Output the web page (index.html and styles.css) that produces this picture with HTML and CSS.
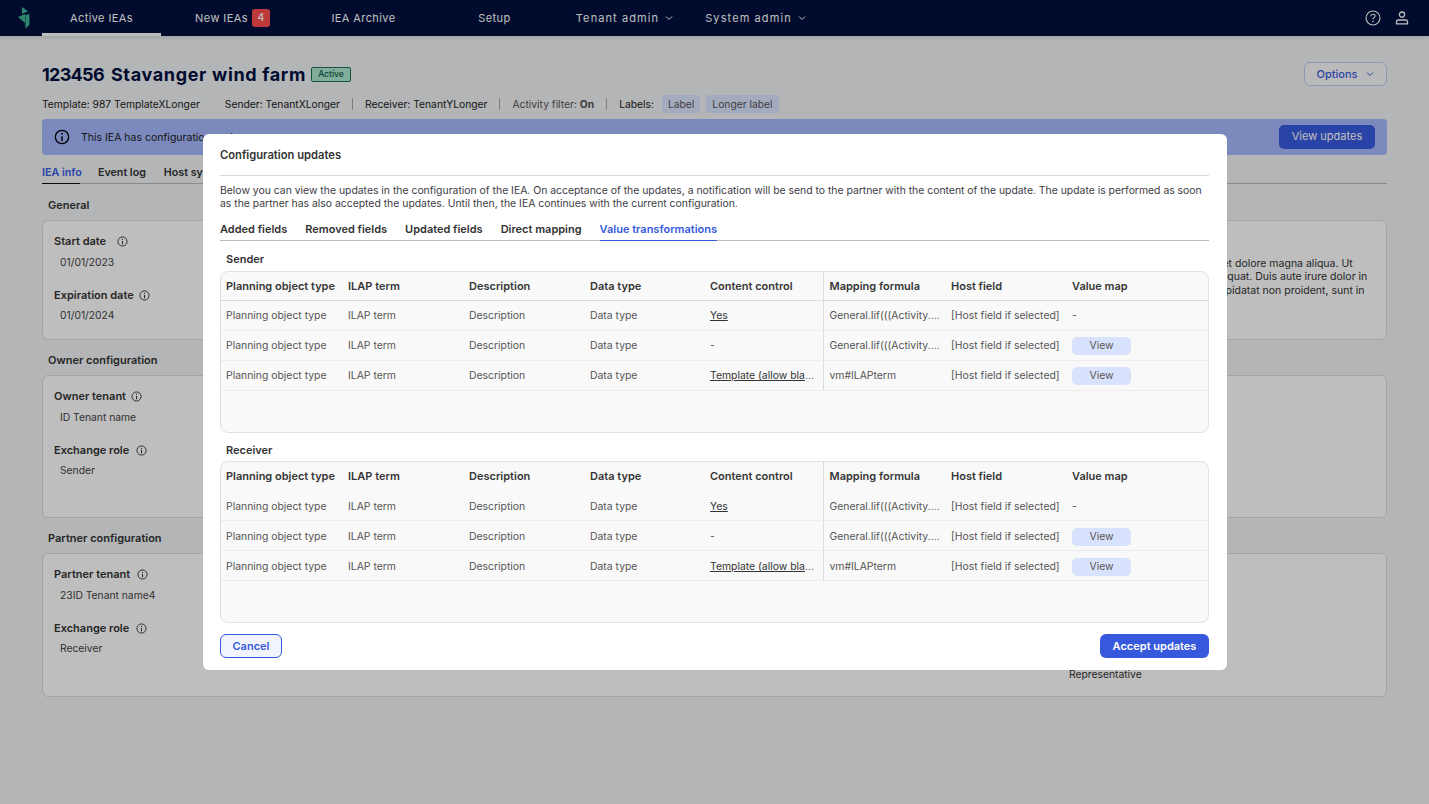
FILE: index.html
```html
<!DOCTYPE html>
<html lang="en">
<head>
<meta charset="utf-8">
<title>Stavanger wind farm</title>
<link rel="stylesheet" href="styles.css">
</head>
<body>
<svg class="defs" width="0" height="0" aria-hidden="true">
  <symbol id="i-info" viewBox="0 0 12 12">
    <circle cx="6" cy="6" r="5" fill="none" stroke="currentColor" stroke-width="1"/>
    <path d="M6 5.400V9" fill="none" stroke="currentColor" stroke-width="1.100"/>
    <circle cx="6" cy="3.600" r=".7" fill="currentColor"/>
  </symbol>
  <symbol id="i-chev" viewBox="0 0 8 6">
    <path d="M1 1.500 4 4.500 7 1.500" fill="none" stroke="currentColor" stroke-width="1"/>
  </symbol>
</svg>

<header class="nav">
  <svg class="logo" viewBox="0 0 12 22" width="12" height="22" aria-label="Logo">
    <path d="M4 0 10 4.200 4 7Z" fill="#3db497"/>
    <path d="M0 10 7 7V16Z" fill="#3db497"/>
    <path d="M7.400 8 11.400 7V18L7.400 21.500Z" fill="#3db497"/>
  </svg>
  <nav class="nav-items">
    <a class="nav-item is-active">Active IEAs</a>
    <a class="nav-item">New IEAs <span class="count">4</span></a>
    <a class="nav-item">IEA Archive</a>
    <a class="nav-item">Setup</a>
    <a class="nav-item nav-wide">Tenant admin <svg class="chev" width="8" height="6"><use href="#i-chev"/></svg></a>
    <a class="nav-item nav-wide">System admin <svg class="chev" width="8" height="6"><use href="#i-chev"/></svg></a>
  </nav>
  <div class="nav-icons">
    <svg width="16" height="16" viewBox="0 0 16 16" aria-label="Help">
      <circle cx="8" cy="8" r="7" fill="none" stroke="currentColor" stroke-width="1.100"/>
      <path d="M5.900 6.200C5.900 4.900 6.900 4.200 8 4.200S10.100 5 10.100 6.100C10.100 7.600 8 7.700 8 9.400" fill="none" stroke="currentColor" stroke-width="1.100"/>
      <circle cx="8" cy="11.500" r=".8" fill="currentColor"/>
    </svg>
    <svg width="14" height="14" viewBox="0 0 14 14" aria-label="Account">
      <circle cx="7" cy="3.600" r="2.600" fill="none" stroke="currentColor" stroke-width="1.300"/>
      <path d="M1.500 12.800V10.800C1.500 9.800 2.300 9 3.300 9H10.700C11.700 9 12.500 9.800 12.500 10.800V12.800Z" fill="none" stroke="currentColor" stroke-width="1.300"/>
    </svg>
  </div>
</header>

<main class="page">
  <div class="title-row">
    <h1 class="title"><span class="title-num">123456</span><span class="title-name">Stavanger wind farm</span></h1>
    <span class="status">Active</span>
    <button class="options">Options <svg class="chev" width="8" height="6"><use href="#i-chev"/></svg></button>
  </div>
  <div class="meta">
    <span>Template: 987 TemplateXLonger</span>
    <i class="sep sep-clear"></i>
    <span>Sender: TenantXLonger</span>
    <i class="sep"></i>
    <span>Receiver: TenantYLonger</span>
    <i class="sep"></i>
    <span class="muted">Activity filter: <b>On</b></span>
    <i class="sep"></i>
    <span>Labels:</span>
    <span class="chips"><span class="chip">Label</span><span class="chip">Longer label</span></span>
  </div>
  <div class="banner">
    <svg class="banner-icon" width="16" height="16"><use href="#i-info"/></svg>
    <span class="banner-text">This IEA has configuration updates</span>
    <button class="btn-dark">View updates</button>
  </div>
  <div class="page-tabs">
    <a class="page-tab is-active">IEA info</a>
    <a class="page-tab">Event log</a>
    <a class="page-tab">Host system</a>
  </div>

  <h2 class="section-title">General</h2>
  <section class="card card-general">
    <div class="field">
      <div class="field-label">Start date <svg class="info info-far" width="11" height="11"><use href="#i-info"/></svg></div>
      <div class="field-value">01/01/2023</div>
      <div class="field-label field-gap">Expiration date <svg class="info" width="11" height="11"><use href="#i-info"/></svg></div>
      <div class="field-value">01/01/2024</div>
    </div>
    <p class="lorem">Lorem ipsum dolor sit amet, consectetur adipiscing elit, sed do eiusmod tempor incididunt ut labore et dolore magna aliqua. Ut<br>enim ad minim veniam, quis nostrud exercitation ullamco laboris nisi ut aliquip ex ea commodo consequat. Duis aute irure dolor in<br>reprehenderit in voluptate velit esse cillum dolore eu fugiat nulla pariatur. Excepteur sint occaecat cupidatat non proident, sunt in</p>
  </section>

  <h2 class="section-title section-gap">Owner configuration</h2>
  <section class="card card-owner">
    <div class="field">
      <div class="field-label">Owner tenant <svg class="info" width="11" height="11"><use href="#i-info"/></svg></div>
      <div class="field-value">ID Tenant name</div>
      <div class="field-label field-gap">Exchange role <svg class="info info-mid" width="11" height="11"><use href="#i-info"/></svg></div>
      <div class="field-value">Sender</div>
    </div>
  </section>

  <h2 class="section-title section-gap">Partner configuration</h2>
  <section class="card card-partner">
    <div class="field">
      <div class="field-label">Partner tenant <svg class="info info-mid" width="11" height="11"><use href="#i-info"/></svg></div>
      <div class="field-value">23ID Tenant name4</div>
      <div class="field-label field-gap">Exchange role <svg class="info info-mid" width="11" height="11"><use href="#i-info"/></svg></div>
      <div class="field-value">Receiver</div>
    </div>
    <div class="field-end">Representative</div>
  </section>
</main>

<div class="overlay"></div>

<div class="modal" role="dialog" aria-label="Configuration updates">
  <h3 class="modal-title">Configuration updates</h3>
  <p class="modal-text">Below you can view the updates in the configuration of the IEA. On acceptance of the updates, a notification will be send to the partner with the content of the update. The update is performed as soon as the partner has also accepted the updates. Until then, the IEA continues with the current configuration.</p>
  <div class="modal-tabs">
    <a class="modal-tab">Added fields</a>
    <a class="modal-tab">Removed fields</a>
    <a class="modal-tab">Updated fields</a>
    <a class="modal-tab">Direct mapping</a>
    <a class="modal-tab is-active">Value transformations</a>
  </div>

  <h4 class="table-title">Sender</h4>
  <div class="table-wrap">
    <table class="grid grid-lined">
      <thead>
        <tr><th>Planning object type</th><th>ILAP term</th><th>Description</th><th>Data type</th><th class="split">Content control</th><th>Mapping formula</th><th>Host field</th><th>Value map</th></tr>
      </thead>
      <tbody>
        <tr><td>Planning object type</td><td>ILAP term</td><td>Description</td><td>Data type</td><td class="split"><u>Yes</u></td><td>General.Iif(((Activity....</td><td>[Host field if selected]</td><td>-</td></tr>
        <tr><td>Planning object type</td><td>ILAP term</td><td>Description</td><td>Data type</td><td class="split">-</td><td>General.Iif(((Activity....</td><td>[Host field if selected]</td><td><span class="view">View</span></td></tr>
        <tr><td>Planning object type</td><td>ILAP term</td><td>Description</td><td>Data type</td><td class="split"><u>Template (allow bla</u>...</td><td>vm#ILAPterm</td><td>[Host field if selected]</td><td><span class="view">View</span></td></tr>
      </tbody>
    </table>
  </div>

  <h4 class="table-title table-title-next">Receiver</h4>
  <div class="table-wrap">
    <table class="grid grid-plain">
      <thead>
        <tr><th>Planning object type</th><th>ILAP term</th><th>Description</th><th>Data type</th><th class="split">Content control</th><th>Mapping formula</th><th>Host field</th><th>Value map</th></tr>
      </thead>
      <tbody>
        <tr><td>Planning object type</td><td>ILAP term</td><td>Description</td><td>Data type</td><td class="split"><u>Yes</u></td><td>General.Iif(((Activity....</td><td>[Host field if selected]</td><td>-</td></tr>
        <tr><td>Planning object type</td><td>ILAP term</td><td>Description</td><td>Data type</td><td class="split">-</td><td>General.Iif(((Activity....</td><td>[Host field if selected]</td><td><span class="view">View</span></td></tr>
        <tr><td>Planning object type</td><td>ILAP term</td><td>Description</td><td>Data type</td><td class="split"><u>Template (allow bla</u>...</td><td>vm#ILAPterm</td><td>[Host field if selected]</td><td><span class="view">View</span></td></tr>
      </tbody>
    </table>
  </div>

  <div class="modal-actions">
    <button class="btn-outline">Cancel</button>
    <button class="btn-primary">Accept updates</button>
  </div>
</div>
</body>
</html>
```

FILE: styles.css
```css
* { box-sizing: border-box; }
html, body { margin: 0; height: 100%; }
body {
  width: 1429px;
  height: 804px;
  overflow: hidden;
  background: #f1f3f5;
  color: #1c1c22;
  font-family: Inter, "Liberation Sans", sans-serif;
  font-size: 10.3px;
}
.defs { position: absolute; }
button { font-family: inherit; cursor: pointer; }

/* Top navigation */
.nav {
  display: flex;
  align-items: center;
  height: 36px;
  background: #000f3e;
  color: #fff;
  box-shadow: 0 1px 4px rgba(0,0,0,.15);
}
.logo { margin-left: 18px; flex: none; }
.nav-items { display: flex; gap: 12px; margin-left: 12px; height: 100%; }
.nav-item {
  display: flex;
  align-items: center;
  justify-content: center;
  gap: 4px;
  width: 119px;
  height: 100%;
  font-size: 11px;
  letter-spacing: .4px;
  border-bottom: 3px solid transparent;
  padding-top: 2px;
  white-space: nowrap;
}
.nav-item.is-active { border-bottom-color: #fff; }
.nav-wide { letter-spacing: 1.1px; margin-left: -1px; margin-right: 1px; }
.chev { flex: none; margin-left: 2px; }
.count {
  background: #ff4e4e;
  border-radius: 3px;
  width: 18px;
  height: 18px;
  display: inline-flex;
  align-items: center;
  justify-content: center;
  font-size: 10.5px;
  font-weight: 500;
  letter-spacing: 0;
}
.nav-icons { margin-left: auto; margin-right: 20px; display: flex; align-items: center; gap: 14px; }

/* Page */
.page { padding: 0 42px; }
.title-row { display: flex; align-items: center; height: 24px; margin-top: 26px; }
.title { margin: 0; display: flex; gap: 7px; font-size: 18px; font-weight: 700; color: #000f3e; white-space: nowrap; }
.title-num { letter-spacing: -.7px; }
.title-name { letter-spacing: .65px; }
.status {
  margin-left: 5px;
  height: 15px;
  width: 40px;
  display: flex;
  align-items: center;
  justify-content: center;
  background: #ade9d1;
  border: 1px solid #1f6e55;
  border-radius: 2px;
  color: #0c5a45;
  font-size: 8.5px;
  font-weight: 500;
}
.options {
  margin-left: auto;
  width: 83px;
  height: 24px;
  background: #fafafc;
  border: 1px solid #c0cdf5;
  border-radius: 6px;
  color: #385adf;
  font-size: 11px;
  font-weight: 500;
  display: flex;
  align-items: center;
  justify-content: center;
  gap: 7px;
  padding: 0;
}
.meta { display: flex; align-items: center; gap: 12px; height: 18px; margin-top: 9px; font-size: 10.3px; white-space: nowrap; }
.muted { color: #555; }
.sep { width: 1px; height: 12px; background: #aaa; }
.sep-clear { background: transparent; }
.chips { display: flex; gap: 6px; margin-left: -4px; }
.chip { background: #dde6ff; color: #555; border-radius: 3px; height: 18px; padding: 0 6px; display: flex; align-items: center; }

.banner {
  display: flex;
  align-items: center;
  height: 36px;
  margin-top: 6px;
  padding: 0 12px;
  background: #a5b8fe;
  border-radius: 4px;
}
.banner-icon { color: #000; flex: none; }
.banner-text { margin-left: 11px; font-size: 10.5px; }
.btn-dark {
  margin-left: auto;
  width: 96px;
  height: 24px;
  border: 0;
  border-radius: 5px;
  background: #385adf;
  color: #fff;
  font-size: 11px;
  padding: 0 0 2px;
}
.page-tabs { display: flex; gap: 18px; height: 23px; margin-top: 6px; border-bottom: 1px solid #b8b8b8; }
.page-tab { font-size: 10.7px; font-weight: 600; color: #333; height: 23px; padding-top: 5px; white-space: nowrap; }
.page-tab.is-active { color: #385adf; border-bottom: 1px solid #111; width: 38px; }

.section-title { margin: 14px 0 0 6px; height: 14px; font-size: 11px; font-weight: 600; color: #333; line-height: 14px; }
.section-gap { margin-top: 13px; }
.card {
  display: grid;
  grid-template-columns: 673px 1fr;
  margin-top: 8px;
  padding: 13px 11px 0;
  background: #fff;
  border: 1px solid #ddd;
  border-radius: 6px;
}
.card-general { height: 120px; }
.card-owner { height: 143px; }
.card-partner { height: 144px; }
.field-label { font-size: 11px; font-weight: 600; color: #333; display: flex; align-items: center; gap: 5px; height: 14px; }
.field-gap { margin-top: 19px; }
.field-gap + .field-value { margin-top: 6px; }
.info { color: #333; flex: none; }
.info-far { margin-left: 6px; }
.info-mid { margin-left: 2px; }
.field-value { margin: 7px 0 0 6px; height: 14px; line-height: 14px; color: #444; font-size: 10.3px; }
.lorem { margin: 23px 0 0 0; line-height: 13.400px; font-size: 10.5px; color: #333; white-space: nowrap; }
.field-end { align-self: end; margin: 0 0 15px 342px; color: #333; line-height: 14px; }

/* Overlay + modal */
.overlay { position: fixed; inset: 0; background: rgba(0,0,0,.255); }
.modal {
  position: fixed;
  left: 203px;
  top: 134px;
  width: 1024px;
  height: 536px;
  padding: 0 18px 0 17px;
  background: #fff;
  border-radius: 6px;
  color: #333;
}
.modal-title {
  margin: 0;
  height: 42px;
  padding-top: 14px;
  font-size: 11.2px;
  line-height: 14px;
  font-weight: 600;
  border-bottom: 1px solid #d8d8d8;
}
.modal-text { margin: 8px 0 0; font-size: 10.4px; line-height: 13.300px; color: #3c3c44; }
.modal-tabs { display: flex; gap: 18px; height: 24px; margin-top: 6px; border-bottom: 1px solid #bbb; }
.modal-tab { font-size: 11px; font-weight: 600; color: #333; height: 24px; padding-top: 5px; line-height: 14px; white-space: nowrap; }
.modal-tab.is-active { color: #385adf; border-bottom: 1px solid #385adf; }
.table-title { margin: 11px 0 5px 6px; height: 14px; font-size: 11px; font-weight: 600; line-height: 14px; }
.table-title-next { margin-top: 10px; margin-bottom: 4px; }
.table-wrap {
  height: 162px;
  background: #f9f9f9;
  border: 1px solid #e2e2e2;
  border-radius: 8px;
  overflow: hidden;
}
.grid { table-layout: fixed; width: 989px; border-collapse: collapse; margin-left: -1px; }
.grid th:nth-child(1) { width: 122px; }
.grid th:nth-child(2), .grid th:nth-child(3) { width: 121px; }
.grid th:nth-child(4) { width: 120px; }
.grid th:nth-child(5) { width: 119px; }
.grid th:nth-child(6) { width: 122px; }
.grid th:nth-child(7) { width: 121px; }
.grid th, .grid td { padding: 0 0 0 6px; text-align: left; white-space: nowrap; overflow: hidden; }
.grid th { height: 29px; font-size: 11px; font-weight: 600; color: #363636; }
.grid td { height: 30px; font-size: 10.4px; color: #555; border-bottom: 1px solid #ececec; }
.grid-lined th { border-bottom: 1px solid #dcdcdc; }
.grid-plain td { padding-top: 2px; }
.grid .split { border-right: 1px solid #dcdcdc; }
.grid u { color: #333; }
.view {
  display: flex;
  align-items: center;
  justify-content: center;
  width: 59px;
  height: 18px;
  background: #d9e2fc;
  border-radius: 5px;
  color: #555;
}
.modal-actions { display: flex; justify-content: space-between; margin-top: 11px; }
.btn-outline, .btn-primary { height: 24px; border-radius: 6px; font-size: 11px; font-weight: 600; padding: 1px 0 0; }
.btn-outline { width: 62px; background: #f1f4fb; border: 1px solid #385adf; color: #385adf; }
.btn-primary { width: 109px; background: #3558dc; border: 0; color: #fff; }
```
